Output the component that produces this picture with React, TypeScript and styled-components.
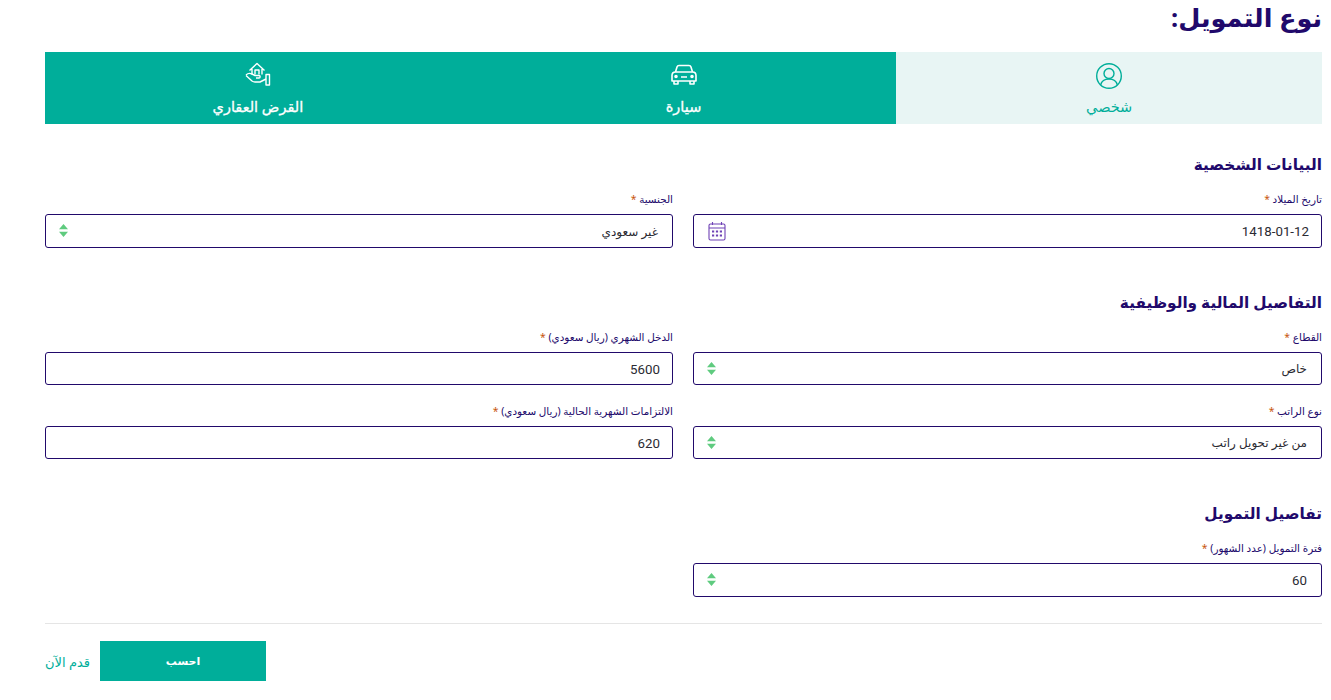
import React from "react";
import styled, { createGlobalStyle } from "styled-components";

const GlobalStyle = createGlobalStyle`
  html, body {
    margin: 0;
    padding: 0;
    background: #fff;
    overflow: hidden;
  }
  * {
    box-sizing: border-box;
  }
`;

const UserIcon = () => (
  <svg width="28" height="28" viewBox="0 0 28 28" fill="none" stroke="#00ae9a" strokeWidth="1.4">
    <circle cx="14" cy="14" r="12.3" />
    <circle cx="14" cy="11.5" r="5" />
    <path d="M5.6 23c1-4 4-6 8.400-6s7.400 2 8.400 6" />
  </svg>
);

const CarIcon = () => (
  <svg width="26" height="24" viewBox="0 -2 26 24" fill="none" stroke="#fff" strokeWidth="1.6" strokeLinejoin="round">
    <path d="M4.500 8l1.500-5c.3-1 1-1.500 2-1.500h10c1 0 1.700.5 2 1.500l1.500 5" />
    <path d="M1 15v-3.500C1 9.500 2.500 8 4.500 8h17c2 0 3.500 1.500 3.500 3.500V17H1z" />
    <path d="M3 17v3h4v-3M19 17v3h4v-3M10 13h6" />
    <circle cx="5" cy="12.500" r="1" fill="#fff" />
    <circle cx="21" cy="12.500" r="1" fill="#fff" />
  </svg>
);

const HouseHandIcon = () => (
  <svg width="26" height="24" viewBox="0 0 26 24" fill="none" stroke="#fff" strokeWidth="1.400" strokeLinejoin="round">
    <path d="M4.500 8.500L12 1.500l7.500 7M7 7v5.500M17 7v5.500" />
    <path d="M10 12.500V8h4v4.500" />
    <path d="M1 13c2-2 4-2 6-1l3 1.500h4c1.500 0 1.500 2.500 0 2.500h-3" />
    <path d="M1 13.500l6 5.500c1 .8 2 1 3 1h5l6-3" />
    <path d="M21 12.500h3.500V23H21z" />
  </svg>
);

const CalendarIcon = () => (
  <CalendarSvg width="18" height="20" viewBox="0 0 18 20" fill="none" stroke="#6f42b5" strokeWidth="1.100">
    <rect x="1" y="3" width="16" height="16" rx="1.500" />
    <path d="M1 7h16M4.500 1v3M13.500 1v3" />
    <g fill="#6f42b5" stroke="none">
      <rect x="4" y="9.500" width="2.200" height="2" />
      <rect x="7.900" y="9.500" width="2.200" height="2" />
      <rect x="11.800" y="9.500" width="2.200" height="2" />
      <rect x="4" y="13.500" width="2.200" height="2" />
      <rect x="7.900" y="13.500" width="2.200" height="2" />
      <rect x="11.800" y="13.500" width="2.200" height="2" />
    </g>
  </CalendarSvg>
);

const SelectArrows = () => (
  <svg width="9" height="13" viewBox="0 0 9 13" fill="#5fcb7f">
    <path d="M4.500 0l4.500 5.200H0zM4.500 13L0 7.800h9z" />
  </svg>
);

const Field = ({ label, value, kind }: { label: string; value: string; kind?: "select" | "date" }) => (
  <FieldWrapper>
    <FieldLabel>
      {label} <Star>*</Star>
    </FieldLabel>
    <InputBox>
      <InputValue $inset={kind === "select"} $numeric={/^\d/.test(value)}>
        {value}
      </InputValue>
      {kind === "select" && <SelectArrows />}
      {kind === "date" && <CalendarIcon />}
    </InputBox>
  </FieldWrapper>
);

export default function App() {
  return (
    <>
      <GlobalStyle />
      <Page dir="rtl">
        <Title>نوع التمويل:</Title>
        <Tabs>
          <Tab $active>
            <TabIcon>
              <UserIcon />
            </TabIcon>
            <TabName>شخصي</TabName>
          </Tab>
          <Tab>
            <TabIcon>
              <CarIcon />
            </TabIcon>
            <TabName>سيارة</TabName>
          </Tab>
          <Tab>
            <TabIcon>
              <HouseHandIcon />
            </TabIcon>
            <TabName>القرض العقاري</TabName>
          </Tab>
        </Tabs>

        <SectionTitle $top={30}>البيانات الشخصية</SectionTitle>
        <FormGrid>
          <Field label="تاريخ الميلاد" value="1418-01-12" kind="date" />
          <Field label="الجنسية" value="غير سعودي" kind="select" />
        </FormGrid>

        <SectionTitle $top={44}>التفاصيل المالية والوظيفية</SectionTitle>
        <FormGrid>
          <Field label="القطاع" value="خاص" kind="select" />
          <Field label="الدخل الشهري (ريال سعودي)" value="5600" />
          <Field label="نوع الراتب" value="من غير تحويل راتب" kind="select" />
          <Field label="الالتزامات الشهرية الحالية (ريال سعودي)" value="620" />
        </FormGrid>

        <SectionTitle $top={44}>تفاصيل التمويل</SectionTitle>
        <FormGrid>
          <Field label="فترة التمويل (عدد الشهور)" value="60" kind="select" />
        </FormGrid>

        <Footer>
          <ApplyLink>قدم الآن</ApplyLink>
          <SubmitButton>احسب</SubmitButton>
        </Footer>
      </Page>
    </>
  );
}

const Page = styled.div`
  width: 1331px;
  height: 700px;
  padding: 0 9px 0 45px;
  font-family: "Noto Sans", "DejaVu Sans", sans-serif;
  color: #21096b;
`;

const Title = styled.h1`
  margin: 0;
  height: 52px;
  font-size: 25.500px;
  line-height: 35px;
  font-weight: 700;
`;

const Tabs = styled.div`
  display: grid;
  grid-template-columns: repeat(3, 1fr);
  height: 72px;
  background: #00ae9a;
`;

const Tab = styled.div<{ $active?: boolean }>`
  display: flex;
  flex-direction: column;
  align-items: center;
  padding-top: 10px;
  background: ${(p) => (p.$active ? "#e8f5f4" : "#00ae9a")};
  color: ${(p) => (p.$active ? "#00ae9a" : "#fff")};
  -webkit-text-stroke: ${(p) => (p.$active ? "0" : "0.3px")};
`;

const TabIcon = styled.div`
  height: 33px;
`;

const TabName = styled.div`
  font-size: 14.500px;
  line-height: 22px;
`;

const SectionTitle = styled.h2<{ $top: number }>`
  margin: ${(p) => p.$top}px 0 0;
  height: 38px;
  font-size: 15.300px;
  line-height: 20px;
  font-weight: 700;
`;

const FormGrid = styled.div`
  display: grid;
  grid-template-columns: 629px 628px;
  column-gap: 20px;
  row-gap: 18.400px;
`;

const FieldWrapper = styled.div`
  display: flex;
  flex-direction: column;
`;

const FieldLabel = styled.label`
  font-size: 10.400px;
  line-height: 14px;
  height: 22px;
  color: #21096b;
`;

const Star = styled.span`
  color: #c8560f;
`;

const InputBox = styled.div`
  display: flex;
  align-items: center;
  justify-content: space-between;
  height: 33.600px;
  padding: 0 12px 0 13px;
  border: 1px solid #21096b;
  border-radius: 3px;
`;

const InputValue = styled.span<{ $inset?: boolean; $numeric?: boolean }>`
  font-family: ${(p) => (p.$numeric ? "Roboto, sans-serif" : "inherit")};
  font-size: ${(p) => (p.$numeric ? "13.300px" : "12px")};
  color: #2b2b33;
  padding-right: ${(p) => (p.$inset ? "2px" : "0")};
  padding-top: ${(p) => (p.$numeric ? "2px" : "1px")};
`;

const CalendarSvg = styled.svg`
  margin-left: 1px;
`;

const Footer = styled.div`
  margin-top: 26px;
  border-top: 1px solid #e5e5e5;
  padding-top: 17px;
  display: flex;
  flex-direction: row-reverse;
  justify-content: flex-start;
  align-items: center;
  gap: 10px;
`;

const SubmitButton = styled.button`
  width: 166px;
  height: 40px;
  border: none;
  background: #00ae9a;
  color: #fff;
  font-family: inherit;
  font-size: 11px;
  font-weight: 700;
`;

const ApplyLink = styled.a`
  font-size: 13px;
  color: #00ae9a;
  padding-top: 2px;
`;
